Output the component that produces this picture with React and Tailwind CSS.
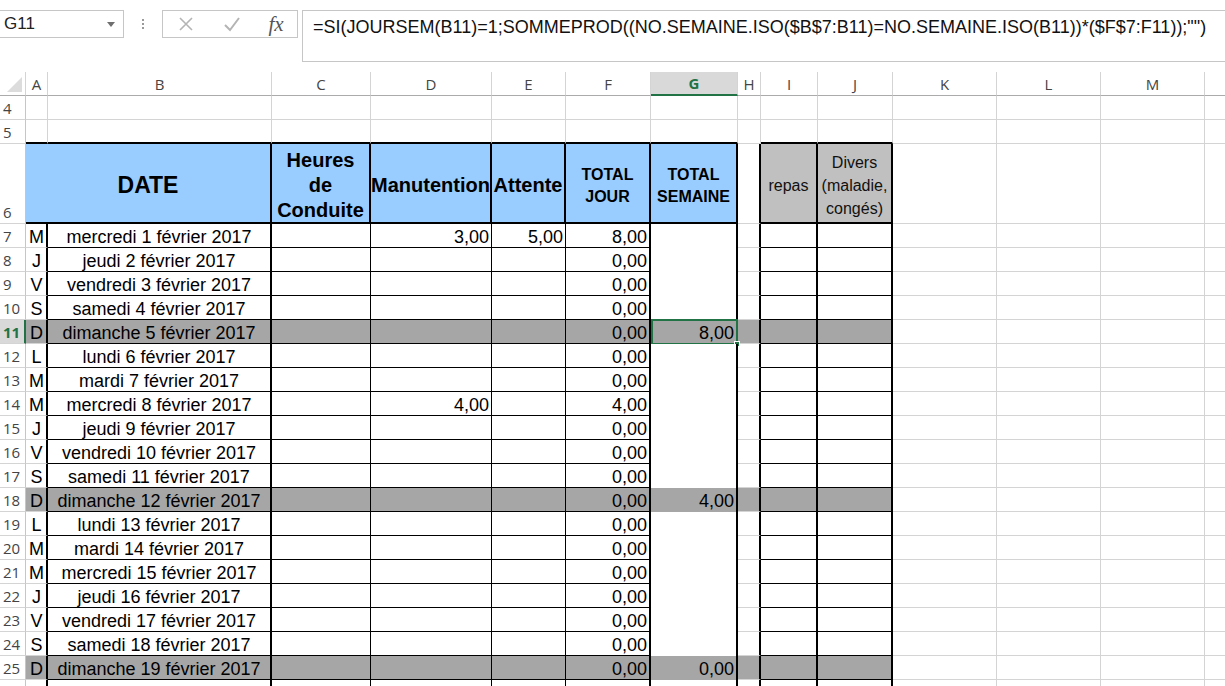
import React from "react";

const CELL = "font-['Liberation_Sans',Arial,sans-serif]";
const UI = "font-['Open_Sans','Liberation_Sans',sans-serif]";

// column widths (px) as in the sheet
const W = {
    A: "w-[22px]",
    B: "w-[224px]",
    C: "w-[99px]",
    D: "w-[121px]",
    E: "w-[74px]",
    F: "w-[85px]",
    G: "w-[87px]",
    H: "w-[23px]",
    I: "w-[57px]",
    J: "w-[75px]",
    K: "w-[104px]",
    L: "w-[104px]",
    M: "w-[104px]",
    N: "w-[104px]",
};
const LETTERS = Object.keys(W);
const GRID = "border-r border-r-[#d4d4d4] border-b border-b-[#d4d4d4]";

const rows = [
    { n: 7, l: "M", d: "mercredi 1 février 2017", D: "3,00", E: "5,00", F: "8,00" },
    { n: 8, l: "J", d: "jeudi 2 février 2017", F: "0,00" },
    { n: 9, l: "V", d: "vendredi 3 février 2017", F: "0,00" },
    { n: 10, l: "S", d: "samedi 4 février 2017", F: "0,00" },
    { n: 11, l: "D", d: "dimanche 5 février 2017", F: "0,00", G: "8,00", sun: true, sel: true },
    { n: 12, l: "L", d: "lundi 6 février 2017", F: "0,00" },
    { n: 13, l: "M", d: "mardi 7 février 2017", F: "0,00" },
    { n: 14, l: "M", d: "mercredi 8 février 2017", D: "4,00", F: "4,00" },
    { n: 15, l: "J", d: "jeudi 9 février 2017", F: "0,00" },
    { n: 16, l: "V", d: "vendredi 10 février 2017", F: "0,00" },
    { n: 17, l: "S", d: "samedi 11 février 2017", F: "0,00" },
    { n: 18, l: "D", d: "dimanche 12 février 2017", F: "0,00", G: "4,00", sun: true },
    { n: 19, l: "L", d: "lundi 13 février 2017", F: "0,00" },
    { n: 20, l: "M", d: "mardi 14 février 2017", F: "0,00" },
    { n: 21, l: "M", d: "mercredi 15 février 2017", F: "0,00" },
    { n: 22, l: "J", d: "jeudi 16 février 2017", F: "0,00" },
    { n: 23, l: "V", d: "vendredi 17 février 2017", F: "0,00" },
    { n: 24, l: "S", d: "samedi 18 février 2017", F: "0,00" },
    { n: 25, l: "D", d: "dimanche 19 février 2017", F: "0,00", G: "0,00", sun: true },
    { n: 26 },
];

function FormulaBar() {
    return (
        <div className="h-[72px] flex items-start pt-[10px] bg-white">
            <div className="w-[124px] h-[28px] shrink-0 border border-[#c6c6c6] border-l-0 flex items-center justify-between pl-[4px] pr-[8px]">
                <span className={`${CELL} text-[17px] text-[#222]`}>G11</span>
                <svg width="8" height="5" viewBox="0 0 8 5">
                    <path d="M0 0 H8 L4 5 Z" fill="#6f6f6f" />
                </svg>
            </div>
            <div className="w-[38px] shrink-0 h-[28px] flex flex-col items-center justify-center gap-[2px]">
                <span className="w-[2px] h-[2px] bg-[#9a9a9a]" />
                <span className="w-[2px] h-[2px] bg-[#9a9a9a]" />
                <span className="w-[2px] h-[2px] bg-[#9a9a9a]" />
            </div>
            <div className="w-[136px] h-[28px] shrink-0 border border-[#c6c6c6] flex items-center">
                <div className="w-[46px] flex justify-center">
                    <svg width="16" height="16" viewBox="0 0 16 16">
                        <path d="M2 2 L14 14 M14 2 L2 14" stroke="#b4b4b4" strokeWidth="1.6" />
                    </svg>
                </div>
                <div className="w-[46px] flex justify-center">
                    <svg width="18" height="16" viewBox="0 0 18 16">
                        <path d="M2 9 L7 14 L16 2" stroke="#b4b4b4" strokeWidth="2" fill="none" />
                    </svg>
                </div>
                <div className="flex-1 flex justify-center">
                    <span className="font-['Liberation_Serif',serif] italic text-[21px] text-[#555] leading-none">fx</span>
                </div>
            </div>
            <div className="ml-[4px] flex-1 h-[52px] border border-[#c6c6c6] border-r-0 pl-[10px] pt-[4px]">
                <span className={`${CELL} text-[18px] leading-[22px] text-[#111] whitespace-nowrap`}>
                    {'=SI(JOURSEM(B11)=1;SOMMEPROD((NO.SEMAINE.ISO($B$7:B11)=NO.SEMAINE.ISO(B11))*($F$7:F11));"")'}
                </span>
            </div>
        </div>
    );
}

function ColumnHeaders() {
    return (
        <div className={`flex h-[24px] ${UI} text-[15px] text-[#444]`}>
            <div className="w-[26px] shrink-0 border-r border-r-[#d4d4d4] border-b border-b-[#ababab] flex items-end justify-end p-[3px]">
                <svg width="15" height="15" viewBox="0 0 15 15">
                    <path d="M15 0 V15 H0 Z" fill="#dcdcdc" />
                </svg>
            </div>
            {LETTERS.map((k) =>
                k === "G" ? (
                    <div key={k} className={`${W[k]} shrink-0 flex items-center justify-center pt-[1px] bg-[#d9d9d9] border-r border-r-[#d4d4d4] border-b-2 border-b-[#217346] text-[#217346] font-bold`}>
                        {k}
                    </div>
                ) : (
                    <div key={k} className={`${W[k]} shrink-0 flex items-center justify-center pt-[1px] border-r border-r-[#d4d4d4] border-b border-b-[#ababab]`}>
                        {k === "N" ? "" : k}
                    </div>
                )
            )}
        </div>
    );
}

function RowHead({ n, sel }) {
    return (
        <div
            className={`w-[26px] shrink-0 h-full flex items-end pl-[3px] pb-[2px] leading-[18px] ${UI} text-[15px] border-b border-b-[#d4d4d4] ${
                sel ? "bg-[#d9d9d9] text-[#217346] font-bold border-r-2 border-r-[#217346]" : "text-[#444] border-r border-r-[#c6c6c6]"
            }`}
        >
            {n < 26 ? n : ""}
        </div>
    );
}

function EmptyRow({ n, topOfTable }) {
    const boxed = ["A", "B", "C", "D", "E", "F", "G", "I", "J"];
    return (
        <div className="flex h-[24px]">
            <RowHead n={n} />
            {LETTERS.map((k) =>
                topOfTable && boxed.includes(k) ? (
                    <div key={k} className={`${W[k]} shrink-0 h-full border-r border-r-[#d4d4d4] border-b-2 border-b-black`} />
                ) : (
                    <div key={k} className={`${W[k]} shrink-0 h-full ${GRID}`} />
                )
            )}
        </div>
    );
}

function HeaderRow() {
    const blue = "bg-[#99ccff] border-r-2 border-r-black border-b-2 border-b-black flex items-center justify-center text-center pt-[4px] font-bold text-black";
    const grey = "bg-[#c0c0c0] border-r-2 border-r-black border-b-2 border-b-black flex items-center justify-center text-center pt-[5px] text-[16px] text-[#111]";
    return (
        <div className={`flex h-[80px] ${CELL}`}>
            <RowHead n={6} />
            <div className={`w-[246px] shrink-0 ${blue} text-[23px]`}>DATE</div>
            <div className={`${W.C} shrink-0 ${blue} text-[20px] leading-[25px]`}>
                Heures
                <br />
                de
                <br />
                Conduite
            </div>
            <div className={`${W.D} shrink-0 ${blue} text-[20px]`}>Manutention</div>
            <div className={`${W.E} shrink-0 ${blue} text-[20px]`}>Attente</div>
            <div className={`${W.F} shrink-0 ${blue} text-[16px] leading-[22px] pt-[6px]`}>
                TOTAL
                <br />
                JOUR
            </div>
            <div className={`${W.G} shrink-0 ${blue} text-[16px] leading-[22px] pt-[6px]`}>
                TOTAL
                <br />
                SEMAINE
            </div>
            <div className={`${W.H} shrink-0 border-r-2 border-r-black border-b border-b-[#d4d4d4]`} />
            <div className={`${W.I} shrink-0 ${grey}`}>repas</div>
            <div className={`${W.J} shrink-0 ${grey} leading-[23px]`}>
                Divers
                <br />
                (maladie,
                <br />
                congés)
            </div>
            {["K", "L", "M", "N"].map((k) => (
                <div key={k} className={`${W[k]} shrink-0 ${GRID}`} />
            ))}
        </div>
    );
}

function DataRow({ r }) {
    const bg = r.sun ? "bg-[#a6a6a6]" : "bg-white";
    const num = "justify-end pr-[2px]";
    return (
        <div className={`flex h-[24px] ${CELL} text-[18px] leading-[20px] text-black`}>
            <RowHead n={r.n} sel={r.sel} />
            <div className={`${W.A} shrink-0 h-full ${bg} flex items-end justify-center pl-[1px] border-r-2 border-r-black border-b border-b-[#d4d4d4]`}>{r.l}</div>
            <div className={`${W.B} shrink-0 h-full ${bg} flex items-end justify-center whitespace-nowrap border-r-2 border-r-black border-b border-b-black`}>{r.d}</div>
            <div className={`${W.C} shrink-0 h-full ${bg} flex items-end ${num} border-r border-r-black border-b border-b-black`}>{r.C}</div>
            <div className={`${W.D} shrink-0 h-full ${bg} flex items-end ${num} border-r border-r-black border-b border-b-black`}>{r.D}</div>
            <div className={`${W.E} shrink-0 h-full ${bg} flex items-end ${num} border-r border-r-black border-b border-b-black`}>{r.E}</div>
            <div className={`${W.F} shrink-0 h-full ${bg} flex items-end ${num} border-r-2 border-r-black border-b border-b-black`}>{r.F}</div>
            <div className={`${W.G} shrink-0 h-full ${bg} relative flex items-end ${num} pb-[1px] border-r-2 border-r-black`}>
                {r.G}
                {r.sel && (
                    <div className="absolute left-0 top-[-1px] right-[-2px] bottom-[-1px] border-2 border-[#217346]">
                        <span className="absolute right-[-4px] bottom-[-4px] w-[6px] h-[6px] bg-[#217346] border border-white" />
                    </div>
                )}
            </div>
            <div className={`${W.H} shrink-0 h-full ${bg} border-r-2 border-r-black border-b border-b-[#d4d4d4]`} />
            <div className={`${W.I} shrink-0 h-full ${bg} border-r-2 border-r-black border-b border-b-black`} />
            <div className={`${W.J} shrink-0 h-full ${bg} border-r-2 border-r-black border-b border-b-black`} />
            {["K", "L", "M", "N"].map((k) => (
                <div key={k} className={`${W[k]} shrink-0 h-full ${GRID}`} />
            ))}
        </div>
    );
}

export default function App() {
    return (
        <div className="w-[1225px] h-[686px] overflow-hidden bg-white">
            <FormulaBar />
            <ColumnHeaders />
            <EmptyRow n={4} />
            <EmptyRow n={5} topOfTable />
            <HeaderRow />
            {rows.map((r) => (
                <DataRow key={r.n} r={r} />
            ))}
        </div>
    );
}
